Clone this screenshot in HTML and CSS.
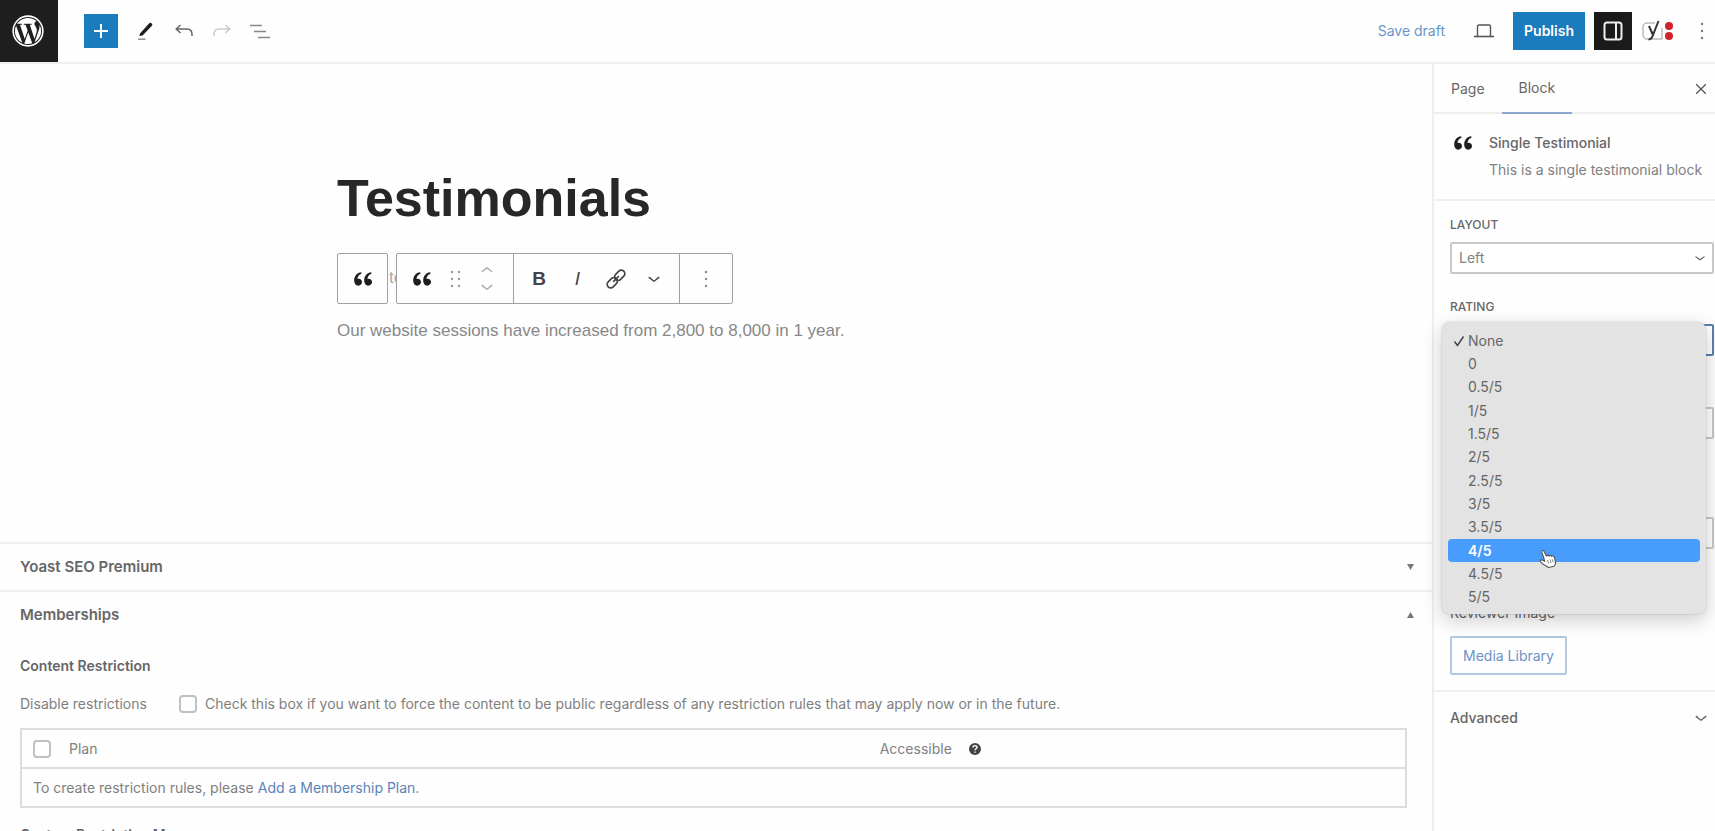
FILE: index.html
```html
<!DOCTYPE html>
<html lang="en">
<head>
    <meta charset="UTF-8" />
    <meta name="viewport" content="width=device-width, initial-scale=1.0" />
    <link rel="stylesheet" href="styles.css">
    <title>Testimonials</title>
</head>
<body>
    <!-- shared icons -->
    <svg class="sprite" aria-hidden="true">
        <symbol id="quote" viewBox="0 0 20 16">
            <path d="M8.2 1.2C4.200 1.500 1.200 4.800 1.200 9.300c0 3.200 1.600 5.400 4.100 5.400 2.100 0 3.700-1.500 3.700-3.600 0-2-1.400-3.400-3.300-3.400-.5 0-1 .1-1.300.3C4.700 5.300 6 3.500 8.500 2.700z" />
            <path d="M18.200 1.200c-4 .3-7 3.600-7 8.100 0 3.200 1.600 5.400 4.100 5.400 2.100 0 3.700-1.500 3.700-3.600 0-2-1.400-3.400-3.300-3.400-.5 0-1 .1-1.300.3.300-2.700 1.600-4.500 4.100-5.300z" />
        </symbol>
        <symbol id="chevron" viewBox="0 0 12 12">
            <path d="M1.500 4.500C3 5.200 4.500 7 6 7.800 7.500 7 9 5.200 10.500 4.500" fill="none" stroke="currentColor" stroke-width="1.200" />
        </symbol>
        <symbol id="dots" viewBox="0 0 4 18">
            <circle cx="2" cy="2" r="1.200" /><circle cx="2" cy="9" r="1.200" /><circle cx="2" cy="16" r="1.200" />
        </symbol>
    </svg>

    <header class="topbar">
        <a href="#" class="logo" aria-label="View Pages">
            <svg width="32" height="32" viewBox="1 1 22 22"><path d="M12.158 12.786l-2.698 7.840c.806.236 1.657.365 2.540.365 1.047 0 2.051-.181 2.986-.510-.024-.038-.046-.079-.065-.124l-2.763-7.571zM3.009 12c0 3.559 2.068 6.634 5.067 8.092L3.788 8.341C3.289 9.459 3.009 10.696 3.009 12zm15.060-.454c0-1.112-.399-1.881-.741-2.480-.456-.741-.883-1.368-.883-2.109 0-.826.627-1.596 1.510-1.596.040 0 .078.005.116.007C16.472 3.904 14.340 3.009 12 3.009c-3.141 0-5.904 1.612-7.512 4.052.211.007.410.011.579.011.940 0 2.396-.114 2.396-.114.484-.028.541.684.057.741 0 0-.487.057-1.029.085l3.274 9.739 1.968-5.901-1.401-3.838c-.484-.028-.943-.085-.943-.085-.485-.029-.428-.769.057-.741 0 0 1.484.114 2.368.114.940 0 2.397-.114 2.397-.114.485-.028.542.684.057.741 0 0-.488.057-1.029.085l3.249 9.665.897-2.996c.456-1.169.684-2.137.684-2.907zm1.820-3.860c.039.286.060.593.060.924 0 .912-.171 1.938-.684 3.220l-2.746 7.940c2.673-1.558 4.470-4.454 4.470-7.771 0-1.563-.399-3.033-1.100-4.314z" fill="#fff" /><circle cx="12" cy="12" r="10.200" fill="none" stroke="#fff" stroke-width="1.100" /></svg>
        </a>
        <div class="tools">
            <button class="add" aria-label="Add block"><svg width="14" height="14" viewBox="0 0 14 14"><path d="M7 0v14M0 7h14" stroke="#fff" stroke-width="2" /></svg></button>
            <button aria-label="Tools"><svg width="18" height="20" viewBox="0 0 18 20"><path d="M3 12.500L12.200 2.300c.6-.7 1.500-.7 2.100-.1l.6.600c.6.600.6 1.400 0 2L5.600 14.400 2.400 15z" fill="#1e1e1e" /><path d="M1 18.200h7.500" stroke="#888" stroke-width="1.400" /></svg></button>
            <button aria-label="Undo"><svg width="18" height="14" viewBox="0 0 18 14"><path d="M5.500 1L1.200 5l4.300 4M1.500 5H12c3.200 0 5 2 5 5.500V12" fill="none" stroke="#666" stroke-width="1.500" /></svg></button>
            <button aria-label="Redo" disabled><svg width="18" height="14" viewBox="0 0 18 14"><path d="M12.500 1l4.300 4-4.300 4M16.500 5H6c-3.200 0-5 2-5 5.500V12" fill="none" stroke="#ccc" stroke-width="1.500" /></svg></button>
            <button aria-label="Document overview"><svg width="20" height="15" viewBox="0 0 20 15"><path d="M0 1.500h12M4 7.500h12M8 13.500h12" stroke="#888" stroke-width="1.500" /></svg></button>
        </div>
        <div class="settings">
            <button class="save">Save draft</button>
            <button class="preview" aria-label="Preview"><svg width="20" height="14" viewBox="0 0 20 14"><path d="M3.500 12V2.500C3.500 1.600 4 1 5 1h10c1 0 1.500.6 1.500 1.500V12" fill="none" stroke="#555" stroke-width="1.400" /><path d="M0 12.500h20" stroke="#555" stroke-width="1.600" /></svg></button>
            <button class="publish">Publish</button>
            <button class="panel-toggle" aria-label="Settings"><svg width="20" height="20" viewBox="0 0 20 20"><rect x="1.500" y="1.500" width="17" height="17" rx="2.500" fill="none" stroke="#eee" stroke-width="2" /><path d="M13 2v16" stroke="#eee" stroke-width="2" /></svg></button>
            <button class="yoast" aria-label="Yoast SEO"><svg width="32" height="22" viewBox="0 0 32 22"><path d="M13 3H5C2.500 3 1 4.500 1 7v7.500C1 17.500 2.500 19 5 19h15V8" fill="none" stroke="#999" stroke-width="1" /><path d="M7 6l4 9M16.500 1L11 15c-1 3-2.200 4.500-4.500 4.500" fill="none" stroke="#333" stroke-width="2" /><circle cx="27" cy="6" r="4" fill="#cf2229" /><circle cx="27" cy="16" r="4" fill="#cf2229" /></svg></button>
            <button class="more" aria-label="Options"><svg width="4" height="18"><use href="#dots" /></svg></button>
        </div>
    </header>

    <div class="workspace">
        <main>
            <section class="canvas">
                <h1>Testimonials</h1>
                <div class="block">
                    <span class="placeholder">to</span>
                    <div class="toolbars">
                        <div class="toolbar">
                            <button class="parent" aria-label="Select parent block"><svg width="20" height="16"><use href="#quote" /></svg></button>
                        </div>
                        <div class="toolbar">
                            <div class="group movers">
                                <button aria-label="Single Testimonial"><svg width="20" height="16"><use href="#quote" /></svg></button>
                                <button class="grip" aria-label="Drag"><svg width="12" height="18"><use href="#dots" width="4" height="18" /><use href="#dots" x="7" width="4" height="18" /></svg></button>
                                <div class="arrows">
                                    <button aria-label="Move up"><svg class="up" width="14" height="14"><use href="#chevron" /></svg></button>
                                    <button aria-label="Move down"><svg width="14" height="14"><use href="#chevron" /></svg></button>
                                </div>
                            </div>
                            <div class="group format">
                                <button class="bold">B</button>
                                <button class="italic">I</button>
                                <button aria-label="Link"><svg width="20" height="20" viewBox="0 0 20 20"><g fill="none" stroke="#444" stroke-width="1.700" transform="rotate(-45 10 10)"><rect x="-1" y="6.500" width="11.500" height="7" rx="3.500" /><rect x="9.500" y="6.500" width="11.500" height="7" rx="3.500" /><path d="M6 10h8" /></g></svg></button>
                                <button aria-label="More"><svg width="14" height="14"><use href="#chevron" /></svg></button>
                            </div>
                            <div class="group options">
                                <button aria-label="Options"><svg width="4" height="18"><use href="#dots" /></svg></button>
                            </div>
                        </div>
                    </div>
                </div>
                <p>Our website sessions have increased from 2,800 to 8,000 in 1 year.</p>
            </section>

            <section class="metabox">
                <h2>Yoast SEO Premium <button aria-label="Toggle Yoast SEO Premium"><svg width="7" height="6"><path d="M0 0h7L3.500 6z" /></svg></button></h2>
            </section>
            <section class="metabox">
                <h2>Memberships <button aria-label="Toggle Memberships"><svg width="7" height="6"><path d="M0 6h7L3.500 0z" /></svg></button></h2>
                <div class="inside">
                    <h3>Content Restriction</h3>
                    <div class="field">
                        <span class="field-name">Disable restrictions</span>
                        <input type="checkbox" id="force-public" />
                        <label for="force-public">Check this box if you want to force the content to be public regardless of any restriction rules that may apply now or in the future.</label>
                    </div>
                    <table>
                        <thead>
                            <tr>
                                <th class="check"><input type="checkbox" aria-label="Select all plans" /></th>
                                <th>Plan</th>
                                <th class="access"><span>Accessible <svg width="12" height="12" viewBox="0 0 12 12"><circle cx="6" cy="6" r="6" fill="#444" /><path d="M4 4.600C4 2 8 2 8 4.500 8 5.800 6 5.800 6 7.200M6 8.400v1.400" fill="none" stroke="#fff" stroke-width="1.400" /></svg></span></th>
                            </tr>
                        </thead>
                        <tbody>
                            <tr>
                                <td colspan="3">To create restriction rules, please <a href="#">Add a Membership Plan.</a></td>
                            </tr>
                        </tbody>
                    </table>
                    <h3>Custom Restriction Message</h3>
                </div>
            </section>
        </main>

        <aside>
            <nav class="tabs">
                <button>Page</button>
                <button class="active">Block</button>
                <button class="close" aria-label="Close settings"><svg width="10" height="10" viewBox="0 0 10 10"><path d="M0 0l10 10M10 0L0 10" stroke="#555" stroke-width="1.300" /></svg></button>
            </nav>
            <div class="card">
                <svg width="20" height="16"><use href="#quote" /></svg>
                <div>
                    <h2>Single Testimonial</h2>
                    <p>This is a single testimonial block</p>
                </div>
            </div>
            <div class="panel">
                <div class="control">
                    <label for="layout">Layout</label>
                    <div class="select">
                        <select id="layout"><option>Left</option></select>
                        <svg width="12" height="12"><use href="#chevron" /></svg>
                    </div>
                </div>
                <div class="control">
                    <label for="rating">Rating</label>
                    <div class="select">
                        <select id="rating" class="focused" aria-expanded="true"></select>
                        <ul class="options-popup" role="listbox" aria-label="Rating">
                            <li role="option" aria-selected="true"><svg width="12" height="12" viewBox="0 0 12 12"><path d="M1.500 6.500L4.500 10.500 10.500 1.500" fill="none" stroke="#444" stroke-width="1.500" /></svg>None</li>
                            <li role="option">0</li>
                            <li role="option">0.5/5</li>
                            <li role="option">1/5</li>
                            <li role="option">1.5/5</li>
                            <li role="option">2/5</li>
                            <li role="option">2.5/5</li>
                            <li role="option">3/5</li>
                            <li role="option">3.5/5</li>
                            <li role="option" class="hover">4/5
                                <svg class="cursor" width="18" height="20" viewBox="0 0 18 20"><path d="M5 9.500L2.800 3.200C2.300 1.500 4.400.8 5.100 2.400L7.300 7c.5-1.200 2.200-1.200 2.700 0 .6-1 2.200-.8 2.600.3.900-.7 2.200-.2 2.600.9l1.200 3.800c.6 2.200-.1 3.900-1.400 5.200L9.500 18.500C7.500 17.500 4 15.500 1.500 12.800c-1-1.200.3-2.400 1.700-1.700L5.500 12.200z" fill="#fff" stroke="#555" stroke-width="1.100" /><path d="M8.500 11l1 3.500M11 10.500l1 3.500M13.300 10.300l.9 3" stroke="#777" stroke-width="0.900" /></svg>
                            </li>
                            <li role="option">4.5/5</li>
                            <li role="option">5/5</li>
                        </ul>
                    </div>
                </div>
                <div class="control text-control">
                    <input type="text" aria-label="Reviewer name" />
                </div>
                <div class="control text-control">
                    <input type="text" aria-label="Reviewer title" />
                </div>
                <div class="image-name">Reviewer Image</div>
                <button class="media">Media Library</button>
            </div>
            <button class="advanced">Advanced <svg width="14" height="14"><use href="#chevron" /></svg></button>
        </aside>
    </div>
</body>
</html>
```
FILE: styles.css
```css
* {
    box-sizing: border-box;
    margin: 0;
    padding: 0;
}
body {
    display: flex;
    flex-direction: column;
    height: 100vh;
    overflow: hidden;
    background-color: #fefefe;
    color: #666;
    font: 14px/20px Inter, "Liberation Sans", sans-serif;
}
button {
    display: flex;
    align-items: center;
    justify-content: center;
    border: none;
    background: none;
    color: inherit;
    font: inherit;
    cursor: pointer;
}
svg {
    display: block;
    flex: none;
}
a {
    color: #5b83bb;
    text-decoration: none;
}
.sprite {
    position: absolute;
    width: 0;
    height: 0;
}

/* top bar */
.topbar {
    display: flex;
    align-items: center;
    flex: none;
    height: 64px;
    border-bottom: 2px solid #f0f0f0;
}
.logo {
    display: flex;
    align-items: center;
    justify-content: center;
    align-self: flex-start;
    width: 58px;
    height: 62px;
    padding-right: 3px;
    background-color: #1e1e1e;
}
.tools {
    display: flex;
    align-items: center;
    gap: 4px;
    margin-left: 26px;
}
.tools button {
    width: 34px;
    height: 34px;
}
.tools .add {
    margin-right: 7px;
    background-color: #1a7bbd;
}
.settings {
    display: flex;
    align-items: center;
    margin-left: auto;
}
.save {
    color: #6a95c8;
}
.preview {
    width: 68px;
    padding-left: 10px;
}
.publish {
    width: 72px;
    height: 38px;
    background-color: #1a7bbd;
    color: #fff;
    font-weight: 600;
}
.panel-toggle {
    width: 38px;
    height: 38px;
    margin-left: 9px;
    background-color: #1a1a1a;
}
.yoast {
    margin: 0 4px 0 10px;
}
.more {
    width: 48px;
    margin-right: -11px;
    fill: #777;
}

.workspace {
    display: flex;
    flex: 1;
    min-height: 0;
}
main {
    display: flex;
    flex-direction: column;
    flex: 1;
    min-width: 0;
}

/* editor canvas */
.canvas {
    flex: none;
    width: 758px;
    height: 478px;
    margin: 0 auto;
    padding-top: 104px;
    font-family: "Liberation Sans", sans-serif;
}
h1 {
    color: #272727;
    font-size: 52px;
    line-height: 60px;
}
.block {
    position: relative;
    margin-top: 25px;
}
.placeholder {
    position: absolute;
    top: 15px;
    left: 52px;
    color: #aaa;
    font-size: 17px;
}
.toolbars {
    position: relative;
    display: flex;
    gap: 8px;
}
.toolbar {
    display: flex;
    height: 51px;
    border: 1px solid #a0a0a0;
    border-radius: 2px;
    background-color: #fefefe;
}
.toolbar:first-child {
    z-index: 1;
}
.group {
    display: flex;
    align-items: center;
}
.group + .group {
    border-left: 1px solid #a0a0a0;
}
.toolbar svg {
    fill: #1e1e1e;
}
.parent {
    width: 49px;
}
.movers {
    gap: 18px;
    width: 116px;
    padding-left: 15px;
}
.toolbar .grip svg {
    fill: #999;
}
.arrows {
    color: #aaa;
}
.arrows button + button {
    margin-top: 3px;
}
.up {
    transform: scaleY(-1);
}
.format {
    width: 166px;
    padding: 0 6px;
}
.format button {
    flex: 1;
    color: #444;
    font-size: 19px;
}
.format .bold {
    font-weight: bold;
}
.format .italic {
    font-style: italic;
}
.options {
    justify-content: center;
    width: 53px;
}
.toolbar .options svg {
    fill: #888;
}
.canvas p {
    margin-top: 17px;
    color: #888;
    font-size: 17px;
}

/* meta boxes */
.metabox {
    border-top: 2px solid #f0f0f0;
}
.metabox h2 {
    display: flex;
    align-items: center;
    justify-content: space-between;
    height: 46px;
    padding: 0 18px 0 20px;
    font-size: 15px;
    font-weight: 600;
}
.metabox h2 button {
    fill: #777;
}
.inside {
    padding: 18px 25px 0 20px;
}
h3 {
    font-size: 14px;
    font-weight: 600;
}
.field {
    display: flex;
    align-items: center;
    margin: 18px 0 14px;
    color: #808080;
}
.field-name {
    width: 159px;
}
.field label {
    margin-left: 8px;
}
input[type="checkbox"] {
    appearance: none;
    width: 18px;
    height: 18px;
    border: 2px solid #c0c0c0;
    border-radius: 4px;
    background-color: #fff;
}
table {
    width: 100%;
    border: 2px solid #ddd;
    border-collapse: collapse;
    color: #808080;
}
th,
td {
    height: 39px;
    font-weight: normal;
    text-align: left;
}
.check {
    width: 48px;
    padding-left: 11px;
}
.check input {
    display: block;
}
.access {
    width: 38%;
}
.access span {
    display: flex;
    align-items: center;
    gap: 17px;
}
td {
    border-top: 2px solid #ddd;
    padding-left: 11px;
}
table + h3 {
    margin-top: 17px;
}

/* settings sidebar */
aside {
    flex: none;
    width: 283px;
    border-left: 2px solid #eee;
}
.tabs {
    display: flex;
    height: 50px;
    border-bottom: 2px solid #eee;
}
.tabs button {
    height: 50px;
    padding: 0 17px;
}
.tabs .active {
    border-bottom: 2px solid #8ba9cc;
}
.tabs .close {
    margin-left: auto;
    padding: 0 9px;
}
.card {
    display: flex;
    gap: 16px;
    height: 87px;
    padding: 19px 0 0 19px;
    border-bottom: 2px solid #f0f0f0;
}
.card > svg {
    margin-top: 2px;
    fill: #1e1e1e;
}
.card h2 {
    font-size: 14px;
    font-weight: 500;
}
.card p {
    margin-top: 7px;
    color: #808080;
    white-space: nowrap;
}
.panel {
    padding: 14px 1px 15px 16px;
    border-bottom: 2px solid #f0f0f0;
}
.control {
    margin-bottom: 23px;
}
.control label {
    display: block;
    margin-bottom: 7px;
    font-size: 12px;
    font-weight: 500;
    text-transform: uppercase;
}
.text-control {
    margin-bottom: 54px;
}
.select + .text-control,
.control + .text-control {
    padding-top: 28px;
}
.text-control + .text-control {
    padding-top: 24px;
}
.select {
    position: relative;
}
.select > svg {
    position: absolute;
    top: 10px;
    right: 8px;
}
select,
input[type="text"] {
    display: block;
    appearance: none;
    width: 100%;
    height: 32px;
    padding: 0 7px;
    border: 2px solid #c8c8c8;
    border-radius: 2px;
    background-color: #fff;
    color: #808080;
    font: inherit;
}
.focused {
    border-color: #5b7fae;
}
.options-popup {
    position: absolute;
    top: -2px;
    left: -8px;
    right: 8px;
    z-index: 10;
    display: grid;
    grid-auto-rows: 1fr;
    height: 292px;
    padding: 7px 6px 5px;
    border-radius: 8px;
    background-color: #e3e3e3;
    box-shadow: 0 0 2px rgba(0, 0, 0, 0.2), 0 6px 20px rgba(0, 0, 0, 0.2);
    list-style: none;
}
.options-popup li {
    position: relative;
    display: flex;
    align-items: center;
    padding-left: 20px;
    border-radius: 4px;
}
.options-popup li > svg {
    position: absolute;
    left: 5px;
}
.options-popup .hover {
    background-color: #489dfc;
    color: #fff;
    font-weight: 600;
}
.options-popup li > .cursor {
    top: 10px;
    left: 91px;
    z-index: 1;
}
.image-name {
    margin-bottom: 13px;
}
.media {
    height: 39px;
    padding: 0 11px;
    border: 2px solid #b4c8e0;
    border-radius: 2px;
    color: #6a92c6;
}
.advanced {
    justify-content: space-between;
    width: 100%;
    height: 51px;
    padding: 0 7px 0 16px;
    font-weight: 500;
}
```
